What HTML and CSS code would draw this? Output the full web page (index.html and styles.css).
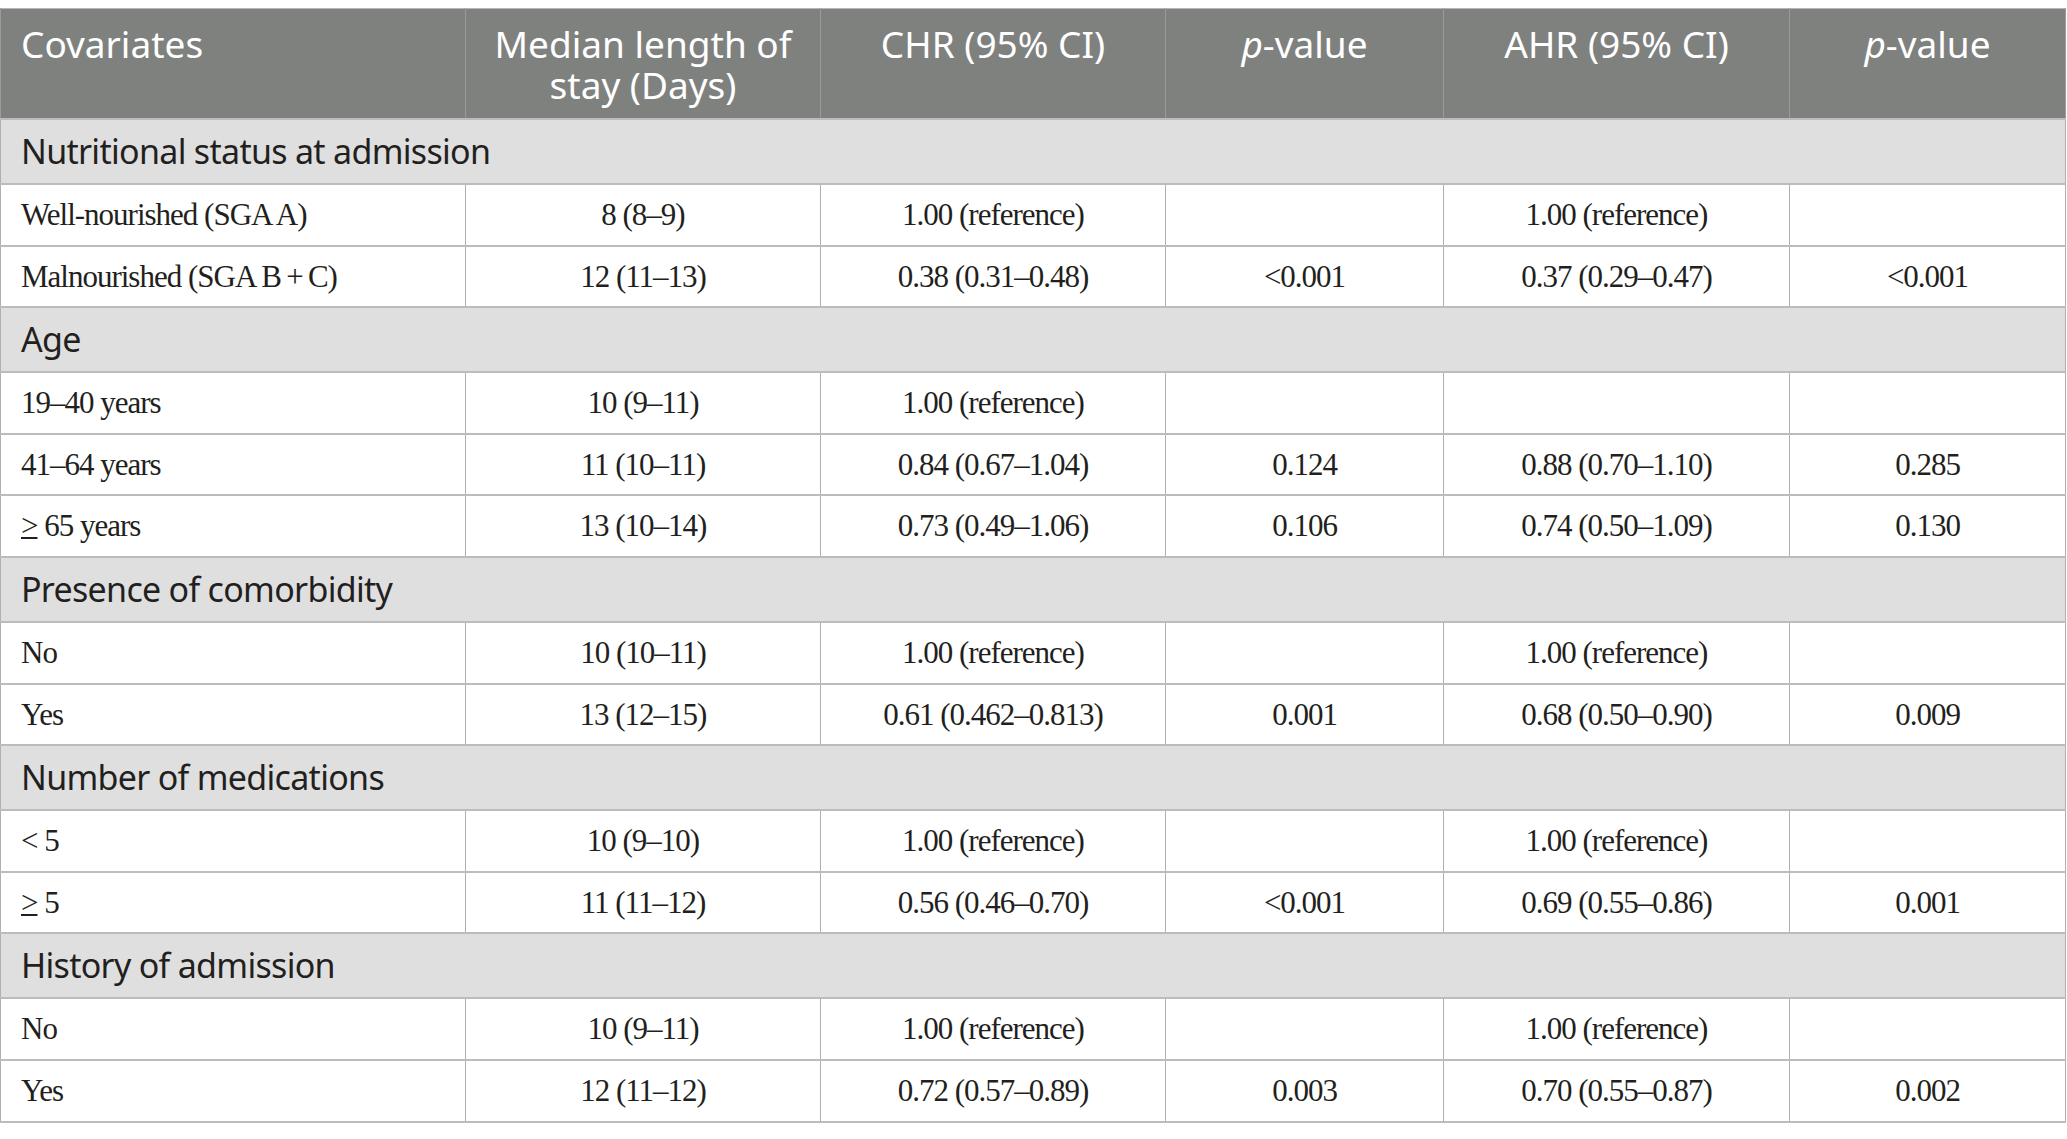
FILE: index.html
```
<!DOCTYPE html>
<html lang="en">
<head>
  <meta charset="UTF-8">
  <meta name="viewport" content="width=device-width, initial-scale=1.0">
  <title>Length of stay by covariates</title>
  <link rel="stylesheet" href="styles.css">
</head>
<body>
  <table class="stats">
    <colgroup>
      <col class="col-cov">
      <col class="col-median">
      <col class="col-chr">
      <col class="col-p1">
      <col class="col-ahr">
      <col class="col-p2">
    </colgroup>
    <thead>
      <tr>
        <th class="left">Covariates</th>
        <th><span class="line">Median length of</span><span class="line">stay (Days)</span></th>
        <th>CHR (95% CI)</th>
        <th><i>p</i>-value</th>
        <th>AHR (95% CI)</th>
        <th><i>p</i>-value</th>
      </tr>
    </thead>
    <tbody>
      <tr class="section"><td colspan="6">Nutritional status at admission</td></tr>
      <tr>
        <td>Well-nourished (SGA A)</td>
        <td>8 (8–9)</td>
        <td>1.00 (reference)</td>
        <td></td>
        <td>1.00 (reference)</td>
        <td></td>
      </tr>
      <tr>
        <td>Malnourished (SGA B&thinsp;+&thinsp;C)</td>
        <td>12 (11–13)</td>
        <td>0.38 (0.31–0.48)</td>
        <td>&lt;0.001</td>
        <td>0.37 (0.29–0.47)</td>
        <td>&lt;0.001</td>
      </tr>

      <tr class="section"><td colspan="6">Age</td></tr>
      <tr>
        <td>19–40 years</td>
        <td>10 (9–11)</td>
        <td>1.00 (reference)</td>
        <td></td>
        <td></td>
        <td></td>
      </tr>
      <tr>
        <td>41–64 years</td>
        <td>11 (10–11)</td>
        <td>0.84 (0.67–1.04)</td>
        <td>0.124</td>
        <td>0.88 (0.70–1.10)</td>
        <td>0.285</td>
      </tr>
      <tr>
        <td><u>&gt;</u> 65 years</td>
        <td>13 (10–14)</td>
        <td>0.73 (0.49–1.06)</td>
        <td>0.106</td>
        <td>0.74 (0.50–1.09)</td>
        <td>0.130</td>
      </tr>

      <tr class="section"><td colspan="6">Presence of comorbidity</td></tr>
      <tr>
        <td>No</td>
        <td>10 (10–11)</td>
        <td>1.00 (reference)</td>
        <td></td>
        <td>1.00 (reference)</td>
        <td></td>
      </tr>
      <tr>
        <td>Yes</td>
        <td>13 (12–15)</td>
        <td>0.61 (0.462–0.813)</td>
        <td>0.001</td>
        <td>0.68 (0.50–0.90)</td>
        <td>0.009</td>
      </tr>

      <tr class="section"><td colspan="6">Number of medications</td></tr>
      <tr>
        <td>&lt; 5</td>
        <td>10 (9–10)</td>
        <td>1.00 (reference)</td>
        <td></td>
        <td>1.00 (reference)</td>
        <td></td>
      </tr>
      <tr>
        <td><u>&gt;</u> 5</td>
        <td>11 (11–12)</td>
        <td>0.56 (0.46–0.70)</td>
        <td>&lt;0.001</td>
        <td>0.69 (0.55–0.86)</td>
        <td>0.001</td>
      </tr>

      <tr class="section"><td colspan="6">History of admission</td></tr>
      <tr>
        <td>No</td>
        <td>10 (9–11)</td>
        <td>1.00 (reference)</td>
        <td></td>
        <td>1.00 (reference)</td>
        <td></td>
      </tr>
      <tr>
        <td>Yes</td>
        <td>12 (11–12)</td>
        <td>0.72 (0.57–0.89)</td>
        <td>0.003</td>
        <td>0.70 (0.55–0.87)</td>
        <td>0.002</td>
      </tr>
    </tbody>
  </table>
</body>
</html>
```

FILE: styles.css
```
* {
  margin: 0;
  padding: 0;
  box-sizing: border-box;
}

body {
  background: #fff;
  padding-top: 8px;
}

.stats {
  width: 2065px;
  border-collapse: collapse;
  table-layout: fixed;
  border-top: 1px solid #b8b8b8;
  border-bottom: 2px solid #b8b8b8;
  border-left: 1px solid #b0b0b0;
  border-right: 1px solid #b0b0b0;
}

.col-cov { width: 465px; }
.col-median { width: 355px; }
.col-chr { width: 345px; }
.col-p1 { width: 278px; }
.col-ahr { width: 346px; }
.col-p2 { width: 276px; }

th {
  background: #7f817f;
  color: #fff;
  font-family: "Noto Sans", "Open Sans", sans-serif;
  font-weight: 400;
  font-size: 37px;
  line-height: 41px;
  text-align: center;
  vertical-align: top;
  padding: 14px 20px 13px;
  border-left: 1px solid #9a9a9a;
  border-right: 1px solid #9a9a9a;
}

th.left {
  text-align: left;
}

th .line {
  display: block;
  height: 41px;
  overflow: visible;
}

td {
  font-family: "Liberation Serif", "Times New Roman", serif;
  font-size: 31px;
  letter-spacing: -1px;
  line-height: 35.6px;
  color: #231f20;
  text-align: center;
  padding: 12px 20px 12px;
  border: 1px solid #b0b0b0;
  border-top: 2px solid #bcbcbc;
  border-bottom: 2px solid #bcbcbc;
}

td:first-child {
  text-align: left;
}

td u {
  text-decoration-thickness: 2px;
  text-underline-offset: 1px;
}

.section td {
  background: #e0dfe0;
  font-family: "Noto Sans", "Open Sans", sans-serif;
  font-size: 34px;
  letter-spacing: -0.7px;
  line-height: 41px;
  text-align: left;
  padding: 11px 20px 11px;
}
```
